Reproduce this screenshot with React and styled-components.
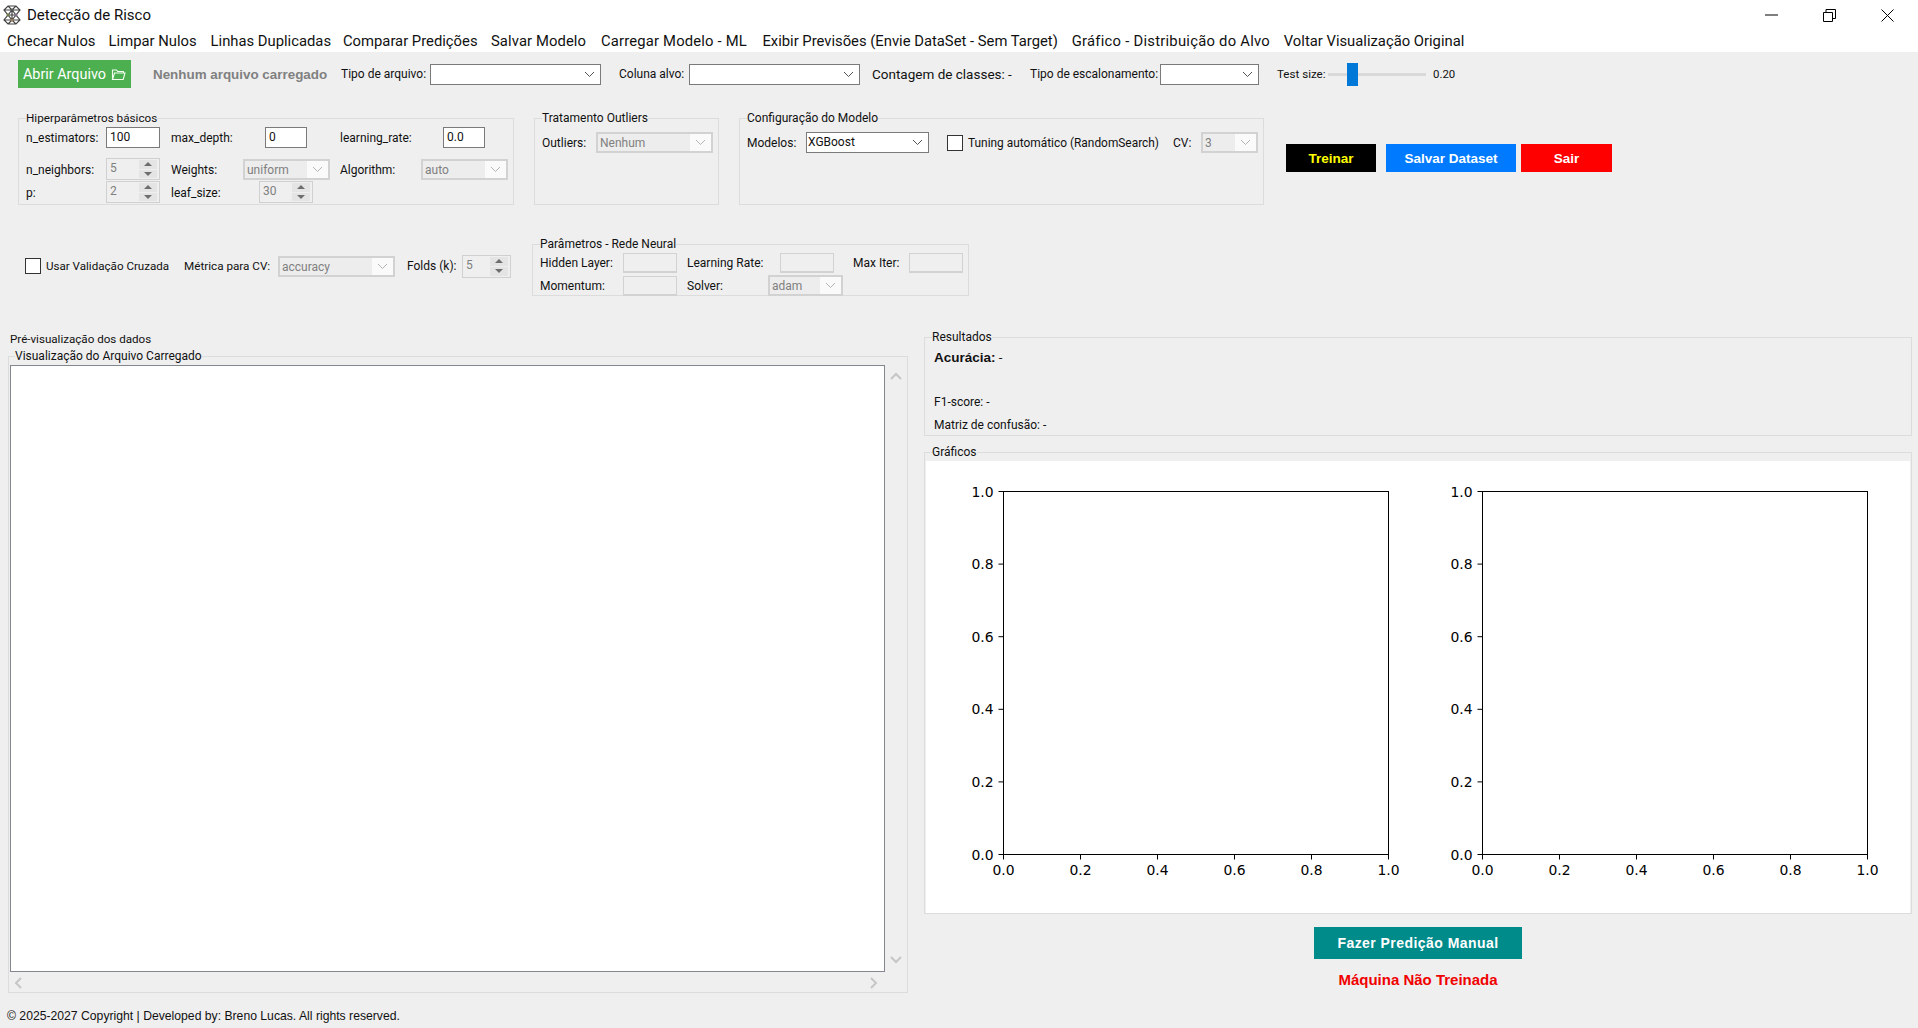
import React from "react";
import styled, { createGlobalStyle } from "styled-components";

const GlobalStyle = createGlobalStyle`
  html, body {
    margin: 0;
    padding: 0;
    background: #efefef;
    overflow: hidden;
  }
  * {
    box-sizing: border-box;
  }
`;

const Win = styled.div`
  width: 1918px;
  height: 1028px;
  background: #efefef;
  font-family: Roboto, "Liberation Sans", sans-serif;
  font-size: 12px;
  color: #111;
  overflow: hidden;
`;

const TitleBar = styled.div`
  height: 30px;
  background: #fff;
  display: flex;
  align-items: center;
  padding: 0 2px;
`;

const TitleText = styled.span`
  font-size: 15px;
  margin-left: 5px;
  flex: 1;
`;

const WinBtn = styled.div`
  width: 58px;
  height: 30px;
  display: flex;
  align-items: center;
  justify-content: center;
`;

const MenuBar = styled.div`
  height: 22px;
  background: #fff;
  display: flex;
  align-items: center;
  padding-left: 7px;
  font-size: 14.8px;
  white-space: nowrap;
`;

const MenuItem = styled.span`
  flex: none;
  width: ${(p) => p.$w}px;
  letter-spacing: ${(p) => p.$ls || 0}px;
`;

const Toolbar = styled.div`
  height: 44px;
  display: flex;
  align-items: center;
  padding-left: 18px;
  white-space: nowrap;
`;

const OpenBtn = styled.button`
  width: 113px;
  height: 28px;
  border: none;
  background: #4caf50;
  color: #fff;
  font-family: Roboto, sans-serif;
  font-size: 14.4px;
  display: flex;
  align-items: center;
  justify-content: center;
  gap: 5px;
  padding: 0;
`;

const FileLabel = styled.span`
  font-family: "Liberation Sans", Arial, sans-serif;
  font-weight: 700;
  font-size: 13.4px;
  color: #808080;
  margin-left: 22px;
  width: 188px;
`;

const Label = styled.span`
  display: inline-block;
  flex: none;
  width: ${(p) => (p.$w ? `${p.$w}px` : "auto")};
  margin-left: ${(p) => p.$ml || 0}px;
  font-size: ${(p) => p.$size || 12}px;
  white-space: nowrap;
`;

const Combo = styled.div`
  flex: none;
  width: ${(p) => p.$w}px;
  height: 21px;
  margin-left: ${(p) => p.$ml || 0}px;
  background: ${(p) => (p.$off ? "#fafafa" : "#fff")};
  border: ${(p) => (p.$off ? "2px solid #d2d2d2" : "1px solid #7a7a7a")};
  display: flex;
  align-items: stretch;
  font-size: 12px;
  color: ${(p) => (p.$off ? "#808080" : "#111")};
`;

const ComboValue = styled.div`
  flex: 1;
  padding-left: ${(p) => (p.$off ? 2 : 1)}px;
  line-height: 18px;
  background: ${(p) => (p.$off ? "#ededed" : "transparent")};
  overflow: hidden;
`;

const ComboArrow = styled.div`
  width: 21px;
  flex: none;
  display: flex;
  align-items: center;
  justify-content: center;
`;

const Slider = styled.div`
  width: 98px;
  height: 23px;
  margin-left: 5px;
  display: flex;
  align-items: center;
  background: linear-gradient(#d9d9d9, #d9d9d9) center / 100% 3px no-repeat;
  padding-left: 19px;
`;

const Thumb = styled.div`
  width: 11px;
  height: 23px;
  background: #0078d7;
`;

const Row = styled.div`
  display: flex;
  align-items: center;
  margin-top: ${(p) => p.$mt || 0}px;
  ${(p) => p.$nudge && `${Label} { padding-top: 2px; }`}
`;

const ParamsRow = styled.div`
  display: flex;
  height: 95px;
  margin-top: 14px;
  margin-left: 18px;
`;

const Group = styled.fieldset`
  margin: 0 0 0 ${(p) => p.$ml || 0}px;
  padding: ${(p) => p.$pad || "1px 7px 0"};
  border: 1px solid #dcdcdc;
  min-width: 0;
  flex: none;
  width: ${(p) => (p.$w ? `${p.$w}px` : "auto")};
  height: ${(p) => p.$h}px;
`;

const Legend = styled.legend`
  padding: 0;
  margin-left: ${(p) => p.$ml || 0}px;
  height: 16px;
  line-height: 16px;
  font-size: ${(p) => p.$size || 12}px;
`;

const TextInput = styled.div`
  flex: none;
  width: ${(p) => p.$w}px;
  height: ${(p) => p.$h || 21}px;
  margin-left: ${(p) => p.$ml || 0}px;
  padding-left: 3px;
  line-height: 19px;
  background: ${(p) => (p.$off ? "#efefef" : "#fff")};
  border: ${(p) => (p.$off ? "1px solid #d2d2d2" : "1px solid #7a7a7a")};
  border-bottom-width: ${(p) => (p.$off ? 2 : 1)}px;
`;

const Spin = styled.div`
  flex: none;
  width: ${(p) => p.$w || 54}px;
  height: ${(p) => p.$h || 22}px;
  margin-left: ${(p) => p.$ml || 0}px;
  border: 1px solid #d0d0d0;
  display: flex;
  justify-content: space-between;
  padding: 1px 1px 1px 3px;
  color: #808080;
  line-height: 16px;
`;

const SpinBtns = styled.div`
  width: 18px;
  margin-right: 1px;
  display: flex;
  flex-direction: column;
  gap: 1px;
`;

const SpinBtn = styled.div`
  flex: 1;
  background: #e4e4e4;
  display: flex;
  align-items: center;
  justify-content: center;
  &::after {
    content: "";
    border-left: 4px solid transparent;
    border-right: 4px solid transparent;
    ${(p) => (p.$down ? "border-top: 4px solid #6e6e6e;" : "border-bottom: 4px solid #6e6e6e;")}
  }
`;

const Check = styled.div`
  flex: none;
  width: 16px;
  height: 16px;
  background: #fff;
  border: 1px solid #333;
  margin-left: ${(p) => p.$ml || 0}px;
`;

const ActionBtn = styled.button`
  width: ${(p) => p.$w}px;
  height: 28px;
  margin-left: ${(p) => p.$ml || 0}px;
  border: none;
  padding: 0;
  background: ${(p) => p.$bg};
  color: ${(p) => p.$fg || "#fff"};
  font-family: "Liberation Sans", Arial, sans-serif;
  font-weight: 700;
  font-size: 13.5px;
`;

const ActionRow = styled.div`
  display: flex;
  margin-left: 22px;
  padding-top: 34px;
`;

const CvRow = styled.div`
  display: flex;
  align-items: center;
  height: 60px;
  margin-top: 31px;
  padding-left: 25px;
`;

const Split = styled.div`
  display: flex;
  margin-top: 33px;
  padding-left: 8px;
`;

const LeftCol = styled.div`
  width: 900px;
  flex: none;
`;

const PreviewTitle = styled.div`
  height: 17px;
  line-height: 16px;
  font-size: 11.6px;
  margin: 2px 0 0 2px;
`;

const PreviewGrid = styled.div`
  display: grid;
  grid-template-columns: 875px 22px;
  grid-template-rows: 607px 21px;
`;

const PreviewBox = styled.div`
  background: #fff;
  border: 1px solid #828790;
`;

const VScroll = styled.div`
  display: flex;
  flex-direction: column;
  justify-content: space-between;
  align-items: center;
  padding: 6px 0 6px;
`;

const HScroll = styled.div`
  display: flex;
  justify-content: space-between;
  align-items: center;
  padding: 0 5px 0 3px;
`;

const RightCol = styled.div`
  width: 988px;
  flex: none;
  margin-left: 16px;
  display: flex;
  flex-direction: column;
  align-items: center;
`;

const ResultsBox = styled(Group)`
  align-self: stretch;
`;

const Accuracy = styled.div`
  font-size: 13px;
  line-height: 16px;
  margin: 5px 0 0 2px;
  b {
    font-family: "Liberation Sans", Arial, sans-serif;
    font-weight: 700;
    font-size: 13.5px;
  }
`;

const Metric = styled.div`
  line-height: 16px;
  margin: ${(p) => p.$mt}px 0 0 2px;
`;

const ChartsBox = styled(Group)`
  align-self: stretch;
  margin-top: 8px;
`;

const ChartArea = styled.div`
  background: #fff;
  height: 452px;
  margin-top: 1px;
`;

const PredictBtn = styled.button`
  width: 208px;
  height: 32px;
  margin-top: 13px;
  border: none;
  padding: 0;
  background: #008b8b;
  color: #fff;
  font-family: "Liberation Sans", Arial, sans-serif;
  font-weight: 700;
  font-size: 14px;
  letter-spacing: 0.45px;
`;

const Status = styled.div`
  margin-top: 13px;
  height: 16px;
  line-height: 16px;
  font-family: "Liberation Sans", Arial, sans-serif;
  font-weight: 700;
  font-size: 15px;
  color: #f00000;
`;

const Footer = styled.div`
  font-family: "Liberation Sans", Arial, sans-serif;
  font-size: 12.2px;
  line-height: 16px;
  margin-top: 15px;
  padding-left: 7px;
`;

const ChevronDown = ({ color = "#555" }) => (
  <svg width="11" height="7" viewBox="0 0 11 7">
    <path d="M1 1l4.5 4.5L10 1" fill="none" stroke={color} strokeWidth="1" />
  </svg>
);

const Chev = ({ dir }) => {
  const d = {
    up: "M1 8l5-5 5 5",
    down: "M1 3l5 5 5-5",
    left: "M8 1L3 6l5 5",
    right: "M3 1l5 5-5 5",
  }[dir];
  return (
    <svg width="12" height="12" viewBox="0 0 12 12">
      <path d={d} fill="none" stroke="#c6c6c6" strokeWidth="2" />
    </svg>
  );
};

// malha hexagonal do icone da janela
const AppIcon = () => (
  <svg width="20" height="20" viewBox="0 0 20 20">
    <path
      d="M6 1h8l4 4-4 5 4 5-4 4H6l-4-4 4-5-4-5zM6 1l4 4 4-4M2 5h16M6 10l4-5 4 5M6 10h8M6 10l4 5 4-5M2 15h16M6 19l4-4 4 4M10 5v10"
      fill="none"
      stroke="#444"
      strokeWidth="1.2"
    />
    <circle cx="6" cy="10" r="1.5" fill="#6f7d4c" />
    <circle cx="14" cy="10" r="1.5" fill="#7f6a8a" />
    <circle cx="10" cy="5" r="1.5" fill="#555" />
    <circle cx="10" cy="15" r="1.5" fill="#9a7d5a" />
  </svg>
);

const FolderIcon = () => (
  <svg width="15" height="13" viewBox="0 0 15 13">
    <path
      d="M1.5 11.5V2h4l1.2 1.5h5.8V5M1.5 11.5h10.7L14 5H3.5z"
      fill="none"
      stroke="#f2fff0"
      strokeWidth="1.1"
    />
  </svg>
);

const ticks = [0, 0.2, 0.4, 0.6, 0.8, 1];

// eixos vazios como o matplotlib desenha
const Axes = ({ x, y, w, h }) => (
  <g fontFamily="'DejaVu Sans', sans-serif" fontSize="13.9" fill="#000">
    <rect x={x} y={y} width={w} height={h} fill="none" stroke="#000" strokeWidth="1" />
    {ticks.map((t) => {
      const py = y + h - t * h;
      const px = x + t * w;
      return (
        <g key={t}>
          <line x1={x - 5} x2={x} y1={py} y2={py} stroke="#000" />
          <line x1={px} x2={px} y1={y + h} y2={y + h + 5} stroke="#000" />
          <text x={x - 10} y={py + 5} textAnchor="end">{t.toFixed(1)}</text>
          <text x={px} y={y + h + 20} textAnchor="middle">{t.toFixed(1)}</text>
        </g>
      );
    })}
  </g>
);

const SelectBox = ({ w, ml, off, value }) => (
  <Combo $w={w} $ml={ml} $off={off}>
    <ComboValue $off={off}>{value}</ComboValue>
    <ComboArrow>
      <ChevronDown color={off ? "#b4b4b4" : "#555"} />
    </ComboArrow>
  </Combo>
);

const SpinBox = ({ value, ml, w, h }) => (
  <Spin $ml={ml} $w={w} $h={h}>
    {value}
    <SpinBtns>
      <SpinBtn />
      <SpinBtn $down />
    </SpinBtns>
  </Spin>
);

const menus = [
  { text: "Checar Nulos", w: 101.6 },
  { text: "Limpar Nulos", w: 102 },
  { text: "Linhas Duplicadas", w: 132.4 },
  { text: "Comparar Predições", w: 148 },
  { text: "Salvar Modelo", w: 110, ls: 0.1 },
  { text: "Carregar Modelo - ML", w: 161.4, ls: 0.18 },
  { text: "Exibir Previsões (Envie DataSet - Sem Target)", w: 309.4 },
  { text: "Gráfico - Distribuição do Alvo", w: 212, ls: 0.25 },
  { text: "Voltar Visualização Original", w: 190 },
];

const App = () => {
  return (
    <Win>
      <GlobalStyle />
      <TitleBar>
        <AppIcon />
        <TitleText>Detecção de Risco</TitleText>
        <WinBtn>
          <svg width="13" height="2"><path d="M0 1h13" stroke="#000" /></svg>
        </WinBtn>
        <WinBtn>
          <svg width="13" height="13" viewBox="0 0 13 13">
            <path d="M.5 3.5h9v9h-9zM3 3.5V.5h9.5v9H9.5" fill="none" stroke="#000" />
          </svg>
        </WinBtn>
        <WinBtn>
          <svg width="13" height="13" viewBox="0 0 13 13">
            <path d="M.5.5l12 12M12.5.5l-12 12" fill="none" stroke="#000" />
          </svg>
        </WinBtn>
      </TitleBar>

      <MenuBar>
        {menus.map((m) => (
          <MenuItem key={m.text} $w={m.w} $ls={m.ls}>{m.text}</MenuItem>
        ))}
      </MenuBar>

      <Toolbar>
        <OpenBtn>
          Abrir Arquivo <FolderIcon />
        </OpenBtn>
        <FileLabel>Nenhum arquivo carregado</FileLabel>
        <Label $w={89}>Tipo de arquivo:</Label>
        <SelectBox w={171} />
        <Label $ml={18} $w={70}>Coluna alvo:</Label>
        <SelectBox w={171} />
        <Label $ml={12} $w={158} $size={13.5}>Contagem de classes: -</Label>
        <Label $w={130}>Tipo de escalonamento:</Label>
        <SelectBox w={99} />
        <Label $ml={18} $w={46} $size={11.6}>Test size:</Label>
        <Slider>
          <Thumb />
        </Slider>
        <Label $ml={7} $size={11.4}>0.20</Label>
      </Toolbar>

      <ParamsRow>
        <Group $w={496} $h={95}>
          <Legend $size={11.7}>Hiperparâmetros básicos</Legend>
          <Row>
            <Label $w={80}>n_estimators:</Label>
            <TextInput $w={54}>100</TextInput>
            <Label $ml={11} $w={94}>max_depth:</Label>
            <TextInput $w={42}>0</TextInput>
            <Label $ml={33} $w={103}>learning_rate:</Label>
            <TextInput $w={42}>0.0</TextInput>
          </Row>
          <Row $mt={10} $nudge>
            <Label $w={80}>n_neighbors:</Label>
            <SpinBox value="5" />
            <Label $ml={11} $w={72}>Weights:</Label>
            <SelectBox w={87} off value="uniform" />
            <Label $ml={10} $w={81}>Algorithm:</Label>
            <SelectBox w={87} off value="auto" />
          </Row>
          <Row $mt={1} $nudge>
            <Label $w={80}>p:</Label>
            <SpinBox value="2" />
            <Label $ml={11} $w={88}>leaf_size:</Label>
            <SpinBox value="30" />
          </Row>
        </Group>

        <Group $ml={20} $w={185} $h={95}>
          <Legend>Tratamento Outliers</Legend>
          <Row $mt={5}>
            <Label $w={54}>Outliers:</Label>
            <SelectBox w={117} off value="Nenhum" />
          </Row>
        </Group>

        <Group $ml={20} $w={525} $h={95}>
          <Legend>Configuração do Modelo</Legend>
          <Row $mt={5}>
            <Label $w={59}>Modelos:</Label>
            <SelectBox w={123} value="XGBoost" />
            <Check $ml={18} />
            <Label $ml={5} $w={205} $size={11.9}>Tuning automático (RandomSearch)</Label>
            <Label $w={28}>CV:</Label>
            <SelectBox w={57} off value="3" />
          </Row>
        </Group>

        <ActionRow>
          <ActionBtn $w={90} $bg="#000" $fg="#ffff00">Treinar</ActionBtn>
          <ActionBtn $w={130} $ml={10} $bg="#007bff">Salvar Dataset</ActionBtn>
          <ActionBtn $w={91} $ml={5} $bg="#ff0000">Sair</ActionBtn>
        </ActionRow>
      </ParamsRow>

      <CvRow>
        <Check />
        <Label $ml={5} $w={138} $size={11.6}>Usar Validação Cruzada</Label>
        <Label $w={94} $size={11.7}>Métrica para CV:</Label>
        <SelectBox w={117} off value="accuracy" />
        <Label $ml={12} $w={55}>Folds (k):</Label>
        <SpinBox value="5" w={49} h={23} />
        <Group $ml={21} $w={437} $h={60}>
          <Legend>Parâmetros - Rede Neural</Legend>
          <Row>
            <Label $w={83}>Hidden Layer:</Label>
            <TextInput $off $w={54} $h={20} />
            <Label $ml={10} $w={93}>Learning Rate:</Label>
            <TextInput $off $w={54} $h={20} />
            <Label $ml={19} $w={56}>Max Iter:</Label>
            <TextInput $off $w={54} $h={20} />
          </Row>
          <Row $mt={2}>
            <Label $w={83}>Momentum:</Label>
            <TextInput $off $w={54} $h={20} />
            <Label $ml={10} $w={81}>Solver:</Label>
            <SelectBox w={75} off value="adam" />
          </Row>
        </Group>
      </CvRow>

      <Split>
        <LeftCol>
          <PreviewTitle>Pré-visualização dos dados</PreviewTitle>
          <Group $h={645} $pad="1px 0 0 1px">
            <Legend $ml={5}>Visualização do Arquivo Carregado</Legend>
            <PreviewGrid>
              <PreviewBox />
              <VScroll>
                <Chev dir="up" />
                <Chev dir="down" />
              </VScroll>
              <HScroll>
                <Chev dir="left" />
                <Chev dir="right" />
              </HScroll>
            </PreviewGrid>
          </Group>
        </LeftCol>

        <RightCol>
          <ResultsBox $h={107} $pad="0 7px 0">
            <Legend>Resultados</Legend>
            <Accuracy>
              <b>Acurácia:</b> -
            </Accuracy>
            <Metric $mt={28}>F1-score: -</Metric>
            <Metric $mt={7}>Matriz de confusão: -</Metric>
          </ResultsBox>
          <ChartsBox $h={470} $pad="0 1px 0">
            <Legend $ml={6}>Gráficos</Legend>
            <ChartArea>
              <svg width="985" height="452" viewBox="0 0 985 452">
                <Axes x={77.5} y={30.5} w={385} h={363} />
                <Axes x={556.5} y={30.5} w={385} h={363} />
              </svg>
            </ChartArea>
          </ChartsBox>
          <PredictBtn>Fazer Predição Manual</PredictBtn>
          <Status>Máquina Não Treinada</Status>
        </RightCol>
      </Split>

      <Footer>© 2025-2027 Copyright | Developed by: Breno Lucas. All rights reserved.</Footer>
    </Win>
  );
};

export default App;
